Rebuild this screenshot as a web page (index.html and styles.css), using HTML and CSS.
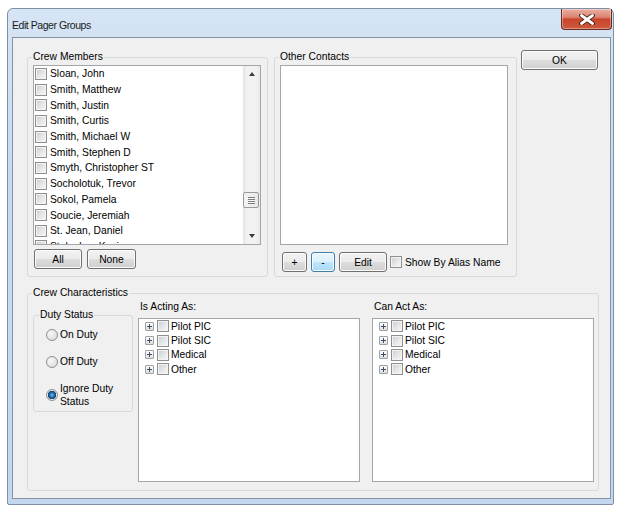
FILE: index.html
```html
<!DOCTYPE html>
<html lang="en">
<head>
    <meta charset="UTF-8">
    <title>Edit Pager Groups</title>
    <link rel="stylesheet" href="styles.css">
</head>
<body>
    <div class="window">
        <div class="titlebar">
            <span class="title">Edit Pager Groups</span>
            <button class="close-btn" aria-label="Close">
                <svg width="16" height="11" viewBox="0 0 16 11">
                    <path d="M2.5 1.5 L13.5 9.5 M13.5 1.5 L2.5 9.5" stroke="#3b1612" stroke-width="4.6" stroke-linecap="round"/>
                    <path d="M2.5 1.5 L13.5 9.5 M13.5 1.5 L2.5 9.5" stroke="#ffffff" stroke-width="2.8" stroke-linecap="round"/>
                </svg>
            </button>
        </div>

        <div class="client">
            <div class="top-row">
                <fieldset class="group crew-group">
                    <legend>Crew Members</legend>
                    <div class="listbox">
                        <div class="list-items">
                            <div class="list-item"><span class="check"></span>Sloan, John</div>
                            <div class="list-item"><span class="check"></span>Smith, Matthew</div>
                            <div class="list-item"><span class="check"></span>Smith, Justin</div>
                            <div class="list-item"><span class="check"></span>Smith, Curtis</div>
                            <div class="list-item"><span class="check"></span>Smith, Michael W</div>
                            <div class="list-item"><span class="check"></span>Smith, Stephen D</div>
                            <div class="list-item"><span class="check"></span>Smyth, Christopher ST</div>
                            <div class="list-item"><span class="check"></span>Socholotuk, Trevor</div>
                            <div class="list-item"><span class="check"></span>Sokol, Pamela</div>
                            <div class="list-item"><span class="check"></span>Soucie, Jeremiah</div>
                            <div class="list-item"><span class="check"></span>St. Jean, Daniel</div>
                            <div class="list-item"><span class="check"></span>Stalnaker, Kevin</div>
                        </div>
                        <div class="scrollbar">
                            <div class="scroll-btn"><span class="arrow-up"></span></div>
                            <div class="scroll-track">
                                <div class="scroll-thumb"><span class="grip"></span></div>
                            </div>
                            <div class="scroll-btn"><span class="arrow-down"></span></div>
                        </div>
                    </div>
                    <div class="btn-row crew-actions">
                        <button class="btn btn-all">All</button>
                        <button class="btn btn-none">None</button>
                    </div>
                </fieldset>

                <fieldset class="group contacts-group">
                    <legend>Other Contacts</legend>
                    <div class="listbox"></div>
                    <div class="btn-row contacts-actions">
                        <button class="btn btn-plus">+</button>
                        <button class="btn btn-minus btn-hot">-</button>
                        <button class="btn btn-edit">Edit</button>
                        <label class="check-label"><span class="check"></span>Show By Alias Name</label>
                    </div>
                </fieldset>

                <button class="btn btn-ok">OK</button>
            </div>

            <fieldset class="group traits-group">
                <legend>Crew Characteristics</legend>
                <div class="traits-row">
                    <fieldset class="group duty-group">
                        <legend>Duty Status</legend>
                        <div class="radio-row"><span class="radio"></span><span>On Duty</span></div>
                        <div class="radio-row"><span class="radio"></span><span>Off Duty</span></div>
                        <div class="radio-row radio-tall"><span class="radio checked"></span><span>Ignore Duty<br>Status</span></div>
                    </fieldset>

                    <div class="tree-col">
                        <div class="tree-label">Is Acting As:</div>
                        <div class="treebox">
                            <div class="tree-item"><span class="expander"></span><span class="check"></span>Pilot PIC</div>
                            <div class="tree-item"><span class="expander"></span><span class="check"></span>Pilot SIC</div>
                            <div class="tree-item"><span class="expander"></span><span class="check"></span>Medical</div>
                            <div class="tree-item"><span class="expander"></span><span class="check"></span>Other</div>
                        </div>
                    </div>

                    <div class="tree-col tree-col-right">
                        <div class="tree-label">Can Act As:</div>
                        <div class="treebox">
                            <div class="tree-item"><span class="expander"></span><span class="check"></span>Pilot PIC</div>
                            <div class="tree-item"><span class="expander"></span><span class="check"></span>Pilot SIC</div>
                            <div class="tree-item"><span class="expander"></span><span class="check"></span>Medical</div>
                            <div class="tree-item"><span class="expander"></span><span class="check"></span>Other</div>
                        </div>
                    </div>
                </div>
            </fieldset>
        </div>
    </div>
</body>
</html>
```

FILE: styles.css
```css
body {
    margin: 0;
    background-color: #fff;
    font-family: "Liberation Sans", Arial, sans-serif;
    font-size: 10.3px;
    color: #000;
}

/* window frame */
.window {
    margin: 8px 0 0 7px;
    width: 607px;
    height: 497px;
    box-sizing: border-box;
    border: 1px solid #7d90a6;
    border-radius: 6px 6px 2px 2px;
    background: linear-gradient(#d6e5f5, #c8dbf0 30%, #c3d8ef);
    display: flex;
    flex-direction: column;
}

.titlebar {
    height: 28px;
    flex: none;
    display: flex;
    align-items: flex-start;
}

.title {
    margin: 10px 0 0 4px;
    font-size: 10.5px;
    line-height: 12px;
    letter-spacing: -0.45px;
    color: #1a1a1a;
}

.close-btn {
    margin: 0 1px 0 auto;
    width: 51px;
    height: 21px;
    padding: 0;
    border: 1px solid #6a2a22;
    border-top: none;
    border-radius: 0 0 4px 4px;
    background: linear-gradient(#eab0a2 0%, #dc8572 40%, #c8452c 52%, #cc5a3e 100%);
    box-shadow: inset 0 0 0 1px rgba(255, 255, 255, 0.35);
    display: flex;
    align-items: center;
    justify-content: center;
}

.client {
    margin: 0 2px 0 4px;
    height: 462px;
    flex: none;
    box-sizing: border-box;
    border: 1px solid #8494a8;
    background-color: #f0f0f0;
}

/* group boxes */
.group {
    margin: 0;
    padding: 0;
    min-width: 0;
    box-sizing: border-box;
    border: 1px solid #d5dadf;
    border-radius: 3px;
}

.group legend {
    padding: 0 1px;
    margin-left: 4px;
    line-height: 12px;
}

.crew-group > legend,
.contacts-group > legend,
.traits-group > legend {
    margin-left: -1px;
}

.duty-group > legend {
    margin-left: 5px;
}

.top-row {
    display: flex;
    align-items: flex-start;
    margin: 13px 0 0 14px;
}

.crew-group {
    width: 241px;
    height: 226px;
    padding: 2px 0 0 5px;
}

.contacts-group {
    width: 243px;
    height: 226px;
    margin-left: 6px;
    padding: 2px 0 0 5px;
}

.listbox {
    width: 228px;
    height: 180px;
    box-sizing: border-box;
    border: 1px solid #a3a6ab;
    background-color: #fff;
    display: flex;
    overflow: hidden;
}

.list-items {
    flex: 1;
    overflow: hidden;
}

.list-item {
    height: 15.7px;
    display: flex;
    align-items: center;
    white-space: nowrap;
}

.list-item .check {
    margin: 0 3px 0 1px;
}

.check {
    width: 12px;
    height: 12px;
    flex: none;
    box-sizing: border-box;
    border: 1px solid #8e8f8f;
    background: linear-gradient(135deg, #c9ccd1 0%, #e6e7e9 55%, #f8f8f8 100%);
    box-shadow: inset 0 0 0 1px #f3f3f3;
}

/* scrollbar */
.scrollbar {
    width: 17px;
    flex: none;
    display: flex;
    flex-direction: column;
    background: linear-gradient(90deg, #e4e4e4, #f2f2f2 25%, #f2f2f2 75%, #e8e8e8);
}

.scroll-btn {
    height: 17px;
    flex: none;
    display: flex;
    align-items: center;
    justify-content: center;
}

.arrow-up {
    border-left: 3px solid transparent;
    border-right: 3px solid transparent;
    border-bottom: 4px solid #3c3c3c;
    margin-top: -2px;
}

.arrow-down {
    border-left: 3px solid transparent;
    border-right: 3px solid transparent;
    border-top: 4px solid #3c3c3c;
}

.scroll-track {
    flex: 1;
}

.scroll-thumb {
    margin: 109px 1px 0 0;
    height: 16px;
    box-sizing: border-box;
    border: 1px solid #9a9a9a;
    border-radius: 2px;
    background: linear-gradient(90deg, #f5f5f5, #e6e6e6);
    display: flex;
    align-items: center;
    justify-content: center;
}

.grip {
    width: 7px;
    height: 7px;
    background: repeating-linear-gradient(#7d7d7d 0 1px, #f7f7f7 1px 2px);
}

/* buttons */
.btn {
    height: 20px;
    padding: 0;
    font: inherit;
    color: #000;
    box-sizing: border-box;
    border: 1px solid #707070;
    border-radius: 3px;
    background: linear-gradient(#f2f2f2 0%, #ebebeb 50%, #dddddd 51%, #cfcfcf 100%);
    box-shadow: inset 0 0 0 1px #fbfbfb;
}

.btn-hot {
    border-color: #3c7fb1;
    background: linear-gradient(#eaf6fd 0%, #d9f0fc 50%, #bee6fd 51%, #a7d9f5 100%);
}

.btn-row {
    display: flex;
    align-items: center;
}

.crew-actions {
    margin: 4px 0 0 1px;
}

.btn-all {
    width: 48px;
}

.btn-none {
    width: 49px;
    margin-left: 5px;
}

.contacts-actions {
    margin: 7px 0 0 2px;
}

.btn-plus {
    width: 25px;
}

.btn-minus {
    width: 24px;
    margin-left: 4px;
}

.btn-edit {
    width: 48px;
    margin-left: 4px;
}

.check-label {
    display: flex;
    align-items: center;
    margin-left: 3px;
    white-space: nowrap;
}

.check-label .check {
    margin-right: 3px;
}

.btn-ok {
    width: 77px;
    margin: -1px 0 0 4px;
}

/* crew characteristics */
.traits-group {
    width: 572px;
    height: 204px;
    margin: 10px 0 0 14px;
    padding: 0 0 0 5px;
}

.traits-row {
    display: flex;
    align-items: flex-start;
}

.duty-group {
    width: 100px;
    height: 103px;
    margin-top: 10px;
}

.radio-row {
    display: flex;
    align-items: center;
    line-height: 14px;
    margin-top: 13px;
}

.radio-row:first-of-type {
    margin-top: 7px;
}

.radio-tall {
    line-height: 13px;
}

.radio {
    width: 12px;
    height: 12px;
    flex: none;
    margin: 0 2px 0 12px;
    box-sizing: border-box;
    border: 1px solid #8e8f8f;
    border-radius: 50%;
    background: radial-gradient(circle at 35% 35%, #f8f8f8, #d4d6d9);
}

.radio.checked {
    background: radial-gradient(circle at 50% 50%, #6fc6f3 0, #2a79b8 2px, #123f6b 4px, #eeeeee 4.5px, #dcdcdc 6px);
}

.tree-col {
    width: 222px;
    margin: 2px 0 0 5px;
}

.tree-col-right {
    margin-left: 12px;
}

.tree-label {
    padding-left: 2px;
    line-height: 12px;
}

.treebox {
    margin-top: 5px;
    height: 164px;
    box-sizing: border-box;
    border: 1px solid #a3a6ab;
    background-color: #fff;
}

.tree-item {
    height: 14.4px;
    display: flex;
    align-items: center;
}

.expander {
    width: 9px;
    height: 9px;
    flex: none;
    margin-left: 6px;
    box-sizing: border-box;
    border: 1px solid #a0a0a0;
    border-radius: 1px;
    background:
        linear-gradient(#3a4f6a, #3a4f6a) center / 5px 1px no-repeat,
        linear-gradient(#3a4f6a, #3a4f6a) center / 1px 5px no-repeat,
        linear-gradient(#ffffff, #dedede);
}

.tree-item .check {
    margin: 0 2px 0 3px;
}
```
